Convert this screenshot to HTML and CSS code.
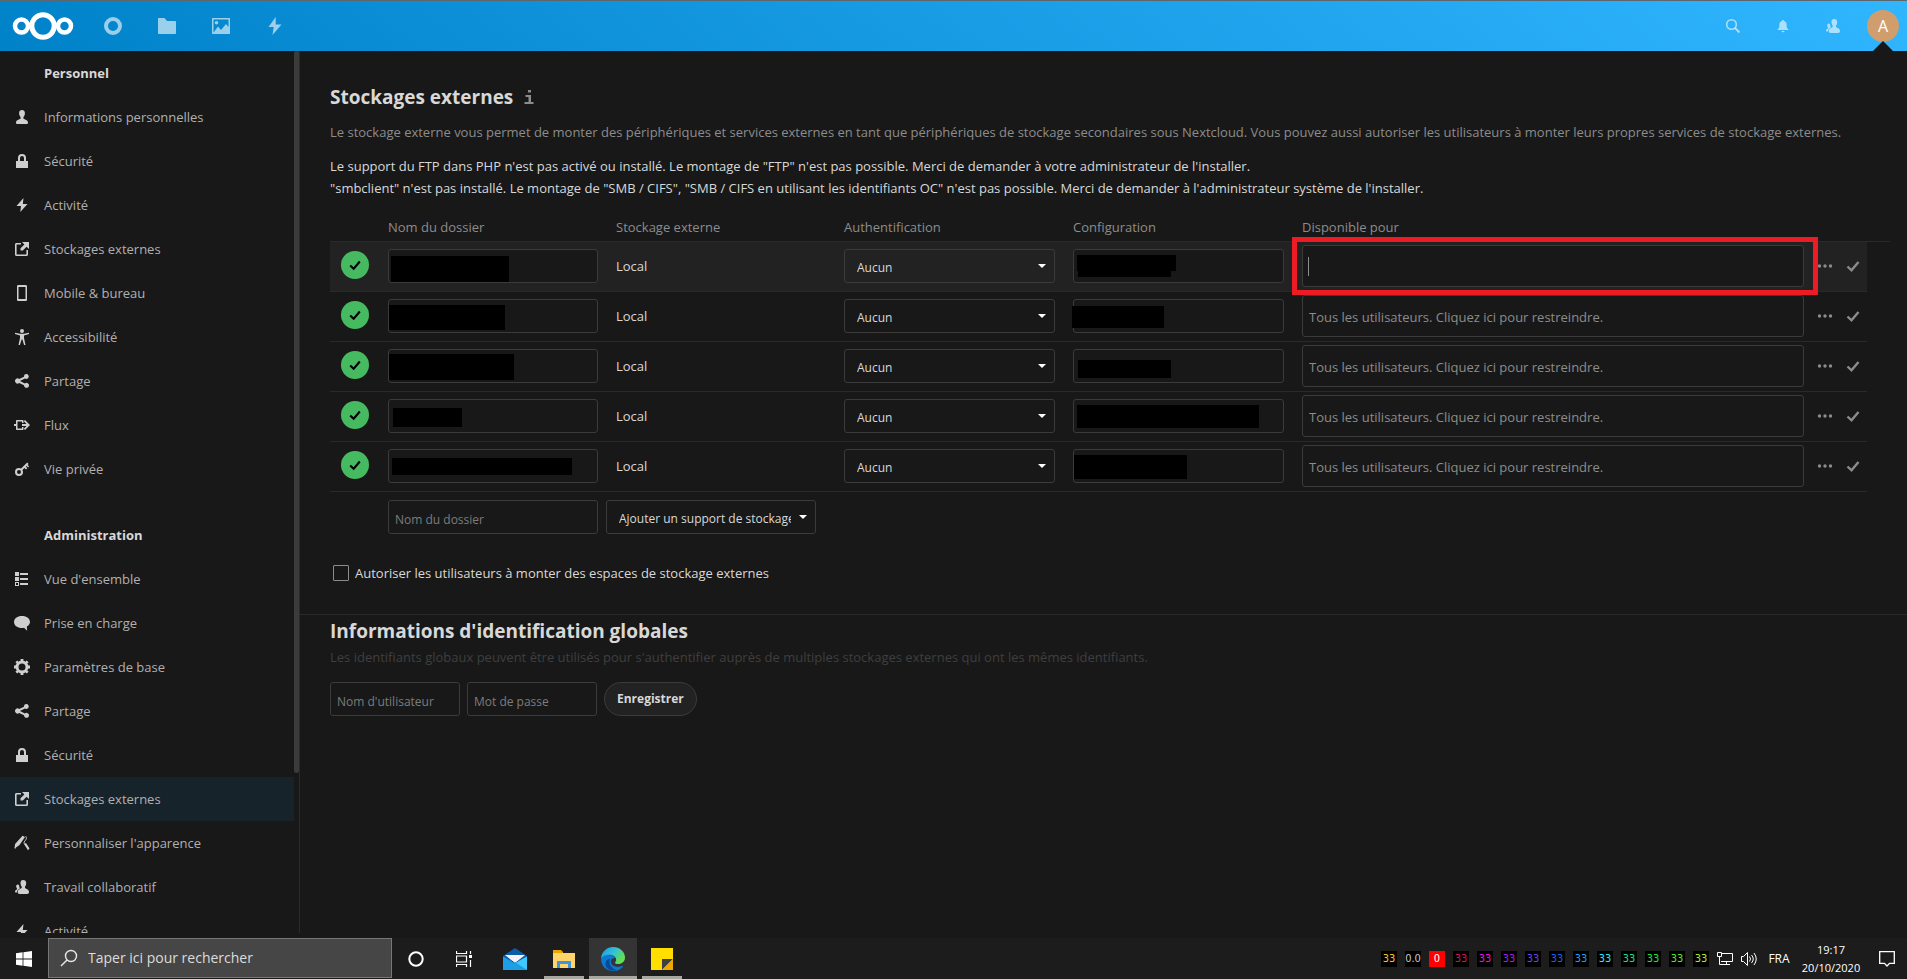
FILE: index.html
```html
<!DOCTYPE html>
<html lang="fr">
<head>
<meta charset="utf-8">
<title>Stockages externes - Nextcloud</title>
<link rel="stylesheet" href="styles.css">
</head>
<body>
<svg class="sprite" aria-hidden="true">
  <symbol id="user" viewBox="0 0 16 16"><path d="M8 1C6.300 1 5.100 2.300 5.100 4c0 1.800.5 3 1.500 4v1.500C5 10.800 2 11 2 13.500 2 14.500 2.500 15 3.500 15h9c1 0 1.500-.5 1.500-1.500 0-2.500-3-2.700-4.600-4V8c1-1 1.500-2.200 1.500-4 0-1.700-1.200-3-2.900-3z"/></symbol>
  <symbol id="lock" viewBox="0 0 16 16"><path d="M8 1a4 4 0 0 0-4 4v3H2v7h12V8h-2V5a4 4 0 0 0-4-4zm0 2a2 2 0 0 1 2 2v3H6V5a2 2 0 0 1 2-2z"/></symbol>
  <symbol id="bolt" viewBox="0 0 16 16"><path d="M9.500 1 2.500 9H7l-.7 6L13.500 7H8.800z"/></symbol>
  <symbol id="external" viewBox="0 0 16 16"><path d="M7 2H2.500C1.600 2 1 2.600 1 3.500v10c0 .9.600 1.500 1.500 1.500h10c.9 0 1.500-.6 1.500-1.500V9h-1.600v4.400H2.600V3.600H7zM8 1l2.400 2.400L6.500 7.300v2.200h2.300l3.800-3.800L15 8V1z"/></symbol>
  <symbol id="phone" viewBox="0 0 16 16"><path d="M4.300 0C3.600 0 3 .6 3 1.300v13.400c0 .7.600 1.300 1.300 1.300h7.400c.7 0 1.300-.6 1.300-1.300V1.300C13 .6 12.400 0 11.700 0zm.2 2h7v12h-7z"/></symbol>
  <symbol id="access" viewBox="0 0 16 16"><circle cx="8" cy="2" r="2"/><path d="M1 3.700v1.200l5 1.500V9L4.500 16h1.400L7.600 10.500h.8L10.100 16h1.400L10 9V6.400l5-1.500V3.700L10 4.800H6z"/></symbol>
  <symbol id="share" viewBox="0 0 16 16"><path d="M12.500 1A2.500 2.500 0 0 0 10 3.800L5.200 6.100A2.500 2.500 0 1 0 5.200 9.900L10 12.200a2.500 2.500 0 1 0 .9-1.800L6 8.100V8l4.900-2.400A2.500 2.500 0 1 0 12.500 1z"/></symbol>
  <symbol id="flow" viewBox="0 0 16 16"><path d="M3 3h5.500c.6 0 1 .4 1 1v2H8V4.600H3.500v6.800H8V10h1.500v2c0 .6-.4 1-1 1H3c-.6 0-1-.4-1-1V9H0V7h2V4c0-.6.4-1 1-1zM11 3l5 5-5 5-1.200-1.200L12.500 9H8V7h4.500L9.800 4.200z"/></symbol>
  <symbol id="key" viewBox="0 0 16 16"><path d="M5 7a4 4 0 1 0 4 4c0-.8-.2-1.500-.6-2.100L10.500 7l1.500 1.500 1.300-1.200L11.800 5.700l.8-.8 1.500 1.500 1-1-1.500-1.500 1-1L13.200 1.500 7.100 7.600C6.500 7.200 5.800 7 5 7zm0 2a2 2 0 1 1 0 4 2 2 0 0 1 0-4z"/></symbol>
  <symbol id="list" viewBox="0 0 16 16"><path fill-rule="evenodd" d="M1 1h4v4H1zM1 6h4v4H1zM1 11h4v4H1zm1 1v2h2v-2zM6 2h8v2H6zM6 7h8v2H6zM6 12h8v2H6z"/></symbol>
  <symbol id="comment" viewBox="0 0 16 16"><path d="M8 1C3.300 1 0 3.600 0 7s3.300 6 8 6c.7 0 1.400-.1 2-.2l3.200 3-.4-4.200C14.800 10.500 16 8.900 16 7c0-3.400-3.300-6-8-6z"/></symbol>
  <symbol id="gear" viewBox="0 0 16 16"><circle cx="8" cy="8" r="5" fill="none" stroke="currentColor" stroke-width="3"/><path d="M6.600 0h2.800v3H6.600zM6.600 13h2.800v3H6.600zM0 6.600h3v2.800H0zM13 6.600h3v2.800h-3zM1.400 3.300l1.900-1.900 2 2-1.900 1.900zM10.700 12.600l1.900-1.900 2 2-1.900 1.900zM12.700 1.400l1.900 1.900-2 2-1.900-1.900zM3.400 10.700l1.900 1.900-2 2-1.900-1.900z"/></symbol>
  <symbol id="brush" viewBox="0 0 16 16"><path d="M8.500.8 11 2 5.500 10 2 12.600 1.200 14 .5 13l.6-4z"/><path d="M11.500 1.200c1.800 1.500.6 3.300-.6 4.800-1 1.300-1.300 2.200.3 3.500" fill="none" stroke="currentColor"/><path d="m10 9 2-1 3.500 5.500L14 15.300z"/></symbol>
  <symbol id="contacts" viewBox="0 0 16 16"><path d="M9 1C7.400 1 6.500 2.200 6.500 4c0 1.600.4 2.700 1.200 3.600v1.500c-1.400 1-4 1.400-4 4 0 1.200.6 1.900 2 1.900H13c1.400 0 2-.7 2-1.900 0-2.600-2.800-3-4-4V7.600c.8-.9 1.200-2 1.200-3.600 0-1.800-1.200-3-3.200-3z"/><path d="M3.800 5.500c-1 0-1.600.7-1.600 1.800 0 .9.300 1.600.8 2v.9C2.200 10.900 1 11.200 1 12.600c0 .6.400 1 1.100 1h.8c-.1-2.200 1.200-3.400 2.900-4.100L5.300 7.500c0-1.300-.6-2-1.500-2z"/></symbol>
  <symbol id="tick" viewBox="0 0 16 16"><path d="M2.500 8.500 6.500 12.300 13.500 4" fill="none" stroke="currentColor" stroke-width="2.400"/></symbol>
  <symbol id="dots" viewBox="0 0 16 16"><circle cx="2.500" cy="8" r="1.700"/><circle cx="8" cy="8" r="1.700"/><circle cx="13.500" cy="8" r="1.700"/></symbol>
</svg>

<header class="header">
  <a class="logo" href="#" aria-label="Nextcloud"><svg viewBox="0 0 62 30"><g fill="none" stroke="#fff"><circle cx="9.500" cy="15" r="6.500" stroke-width="4.500"/><circle cx="31" cy="15" r="11.200" stroke-width="5"/><circle cx="52.500" cy="15" r="6.500" stroke-width="4.500"/></g></svg></a>
  <nav class="apps" aria-label="Applications">
    <a href="#" aria-label="Tableau de bord"><svg viewBox="0 0 20 20"><circle cx="10" cy="10" r="7" fill="none" stroke="currentColor" stroke-width="4"/></svg></a>
    <a href="#" aria-label="Fichiers"><svg viewBox="0 0 20 20"><path d="M1.500 2h6l2.500 3h8c.6 0 1 .4 1 1v11c0 .6-.4 1-1 1H2c-.6 0-1-.4-1-1V2.500z"/></svg></a>
    <a href="#" aria-label="Photos"><svg viewBox="0 0 20 20"><path fill-rule="evenodd" d="M1.500 2h17c.3 0 .5.200.5.500v15c0 .3-.2.500-.5.500h-17c-.3 0-.5-.2-.5-.5v-15c0-.3.200-.5.500-.5zM2.500 3.500v13L7 10.500l3 3.500 5-6 2.500 3V3.500zM5.500 5a1.800 1.800 0 1 0 0 3.600 1.800 1.800 0 0 0 0-3.600z"/></svg></a>
    <a href="#" aria-label="Activité"><svg viewBox="0 0 20 20"><path d="M10.700 1 3.500 11h5.200l-1.200 8L16.500 8.500h-5.800z"/></svg></a>
  </nav>
  <div class="header-right">
    <button aria-label="Rechercher"><svg viewBox="0 0 16 16"><circle cx="6.500" cy="6.500" r="4.800" fill="none" stroke="currentColor" stroke-width="1.600"/><path d="m10 10 4.500 4.500" stroke="currentColor" stroke-width="2"/></svg></button>
    <button aria-label="Notifications"><svg viewBox="0 0 16 16"><path d="M8 2c-.6 0-1 .4-1 1C5 3.500 4.400 5 4.400 7c0 3-.7 3.500-1.900 4.500V12h11v-.5C12.300 10.500 11.600 10 11.600 7c0-2-.6-3.500-2.600-4 0-.6-.4-1-1-1zM6.500 13a1.500 1.200 0 0 0 3 0z"/></svg></button>
    <button aria-label="Contacts"><svg><use href="#contacts"/></svg></button>
    <button class="account" aria-label="Paramètres du compte"><span class="avatar">A</span></button>
  </div>
</header>

<div class="content">
  <aside class="sidebar">
    <nav class="menu" aria-label="Paramètres">
      <h3>Personnel</h3>
      <a href="#"><svg><use href="#user"/></svg>Informations personnelles</a>
      <a href="#"><svg><use href="#lock"/></svg>Sécurité</a>
      <a href="#"><svg><use href="#bolt"/></svg>Activité</a>
      <a href="#"><svg><use href="#external"/></svg>Stockages externes</a>
      <a href="#"><svg><use href="#phone"/></svg>Mobile &amp; bureau</a>
      <a href="#"><svg><use href="#access"/></svg>Accessibilité</a>
      <a href="#"><svg><use href="#share"/></svg>Partage</a>
      <a href="#"><svg><use href="#flow"/></svg>Flux</a>
      <a href="#"><svg><use href="#key"/></svg>Vie privée</a>
      <h3 class="second">Administration</h3>
      <a href="#"><svg><use href="#list"/></svg>Vue d'ensemble</a>
      <a href="#"><svg><use href="#comment"/></svg>Prise en charge</a>
      <a href="#"><svg><use href="#gear"/></svg>Paramètres de base</a>
      <a href="#"><svg><use href="#share"/></svg>Partage</a>
      <a href="#"><svg><use href="#lock"/></svg>Sécurité</a>
      <a href="#" class="active"><svg><use href="#external"/></svg>Stockages externes</a>
      <a href="#"><svg><use href="#brush"/></svg>Personnaliser l'apparence</a>
      <a href="#"><svg><use href="#contacts"/></svg>Travail collaboratif</a>
      <a href="#"><svg><use href="#bolt"/></svg>Activité</a>
    </nav>
    <div class="scroll-thumb"></div>
  </aside>

  <main class="main">
    <section class="storages">
      <h2>Stockages externes <a href="#" class="info" aria-label="Documentation"><svg viewBox="0 0 16 16"><path d="M7 1h3v2.500H7zM4.500 6H10v7h2.500v2h-9v-2h4V8h-3z"/></svg></a></h2>
      <p class="hint">Le stockage externe vous permet de monter des périphériques et services externes en tant que périphériques de stockage secondaires sous Nextcloud. Vous pouvez aussi autoriser les utilisateurs à monter leurs propres services de stockage externes.</p>
      <p class="warning">Le support du FTP dans PHP n'est pas activé ou installé. Le montage de "FTP" n'est pas possible. Merci de demander à votre administrateur de l'installer.<br>"smbclient" n'est pas installé. Le montage de "SMB / CIFS", "SMB / CIFS en utilisant les identifiants OC" n'est pas possible. Merci de demander à l'administrateur système de l'installer.</p>

      <table class="grid">
        <colgroup><col class="c-status"><col class="c-name"><col class="c-storage"><col class="c-auth"><col class="c-config"><col class="c-users"><col class="c-actions"><col class="c-end"></colgroup>
        <thead>
          <tr><th></th><th>Nom du dossier</th><th class="storage">Stockage externe</th><th>Authentification</th><th>Configuration</th><th>Disponible pour</th><th></th><th></th></tr>
        </thead>
        <tbody>
          <tr class="current">
            <td class="status"><span class="ok"><svg><use href="#tick"/></svg></span></td>
            <td><div class="field"><input type="text" aria-label="Nom du dossier"><i class="mask n1"></i></div></td>
            <td class="storage">Local</td>
            <td><div class="field select"><select aria-label="Authentification"><option>Aucun</option></select></div></td>
            <td><div class="field"><input type="text" aria-label="Configuration"><i class="mask k1"></i><i class="mask k1b"></i></div></td>
            <td class="users"><div class="field highlight"><input type="text" aria-label="Disponible pour"><i class="caret"></i></div></td>
            <td class="actions"><div><button aria-label="Options"><svg><use href="#dots"/></svg></button><button aria-label="Enregistrer"><svg><use href="#tick"/></svg></button></div></td>
            <td class="end"></td>
          </tr>
          <tr>
            <td class="status"><span class="ok"><svg><use href="#tick"/></svg></span></td>
            <td><div class="field"><input type="text" aria-label="Nom du dossier"><i class="mask n2"></i></div></td>
            <td class="storage">Local</td>
            <td><div class="field select"><select aria-label="Authentification"><option>Aucun</option></select></div></td>
            <td><div class="field"><input type="text" aria-label="Configuration"><i class="mask k2"></i></div></td>
            <td class="users"><div class="field"><input type="text" aria-label="Disponible pour" placeholder="Tous les utilisateurs. Cliquez ici pour restreindre."></div></td>
            <td class="actions"><div><button aria-label="Options"><svg><use href="#dots"/></svg></button><button aria-label="Enregistrer"><svg><use href="#tick"/></svg></button></div></td>
            <td class="end"></td>
          </tr>
          <tr>
            <td class="status"><span class="ok"><svg><use href="#tick"/></svg></span></td>
            <td><div class="field"><input type="text" aria-label="Nom du dossier"><i class="mask n3"></i></div></td>
            <td class="storage">Local</td>
            <td><div class="field select"><select aria-label="Authentification"><option>Aucun</option></select></div></td>
            <td><div class="field"><input type="text" aria-label="Configuration"><i class="mask k3"></i></div></td>
            <td class="users"><div class="field"><input type="text" aria-label="Disponible pour" placeholder="Tous les utilisateurs. Cliquez ici pour restreindre."></div></td>
            <td class="actions"><div><button aria-label="Options"><svg><use href="#dots"/></svg></button><button aria-label="Enregistrer"><svg><use href="#tick"/></svg></button></div></td>
            <td class="end"></td>
          </tr>
          <tr>
            <td class="status"><span class="ok"><svg><use href="#tick"/></svg></span></td>
            <td><div class="field"><input type="text" aria-label="Nom du dossier"><i class="mask n4"></i></div></td>
            <td class="storage">Local</td>
            <td><div class="field select"><select aria-label="Authentification"><option>Aucun</option></select></div></td>
            <td><div class="field"><input type="text" aria-label="Configuration"><i class="mask k4"></i></div></td>
            <td class="users"><div class="field"><input type="text" aria-label="Disponible pour" placeholder="Tous les utilisateurs. Cliquez ici pour restreindre."></div></td>
            <td class="actions"><div><button aria-label="Options"><svg><use href="#dots"/></svg></button><button aria-label="Enregistrer"><svg><use href="#tick"/></svg></button></div></td>
            <td class="end"></td>
          </tr>
          <tr>
            <td class="status"><span class="ok"><svg><use href="#tick"/></svg></span></td>
            <td><div class="field"><input type="text" aria-label="Nom du dossier"><i class="mask n5"></i></div></td>
            <td class="storage">Local</td>
            <td><div class="field select"><select aria-label="Authentification"><option>Aucun</option></select></div></td>
            <td><div class="field"><input type="text" aria-label="Configuration"><i class="mask k5"></i></div></td>
            <td class="users"><div class="field"><input type="text" aria-label="Disponible pour" placeholder="Tous les utilisateurs. Cliquez ici pour restreindre."></div></td>
            <td class="actions"><div><button aria-label="Options"><svg><use href="#dots"/></svg></button><button aria-label="Enregistrer"><svg><use href="#tick"/></svg></button></div></td>
            <td class="end"></td>
          </tr>
          <tr class="add">
            <td></td>
            <td><div class="field"><input type="text" aria-label="Nom du dossier" placeholder="Nom du dossier"></div></td>
            <td class="new"><div class="field select"><select aria-label="Stockage externe"><option>Ajouter un support de stockage</option></select></div></td>
            <td></td><td></td><td></td><td></td><td></td>
          </tr>
        </tbody>
      </table>

      <label class="allow"><input type="checkbox"><span>Autoriser les utilisateurs à monter des espaces de stockage externes</span></label>
    </section>

    <section class="credentials">
      <h2>Informations d'identification globales</h2>
      <p class="faint">Les identifiants globaux peuvent être utilisés pour s'authentifier auprès de multiples stockages externes qui ont les mêmes identifiants.</p>
      <form>
        <input type="text" aria-label="Nom d'utilisateur" placeholder="Nom d'utilisateur">
        <input type="password" aria-label="Mot de passe" placeholder="Mot de passe">
        <button type="button">Enregistrer</button>
      </form>
    </section>
  </main>
</div>

<footer class="taskbar">
  <button aria-label="Démarrer"><svg class="i16" viewBox="0 0 16 16"><path fill="#fff" d="M0 2.300 6.600 1.300v6.300H0zM7.400 1.200 16 0v7.600H7.400zM0 8.400h6.600v6.300L0 13.700zM7.400 8.400H16V16l-8.600-1.200z"/></svg></button>
  <label class="search"><svg viewBox="0 0 18 18"><circle cx="11" cy="7" r="5.500"/><path d="m7 11-6 6"/></svg><input type="text" aria-label="Rechercher" placeholder="Taper ici pour rechercher"></label>
  <button aria-label="Cortana"><svg class="i16" viewBox="0 0 16 16"><circle cx="8" cy="8" r="6.700" fill="none" stroke="#fff" stroke-width="2"/></svg></button>
  <button aria-label="Affichage des tâches"><svg class="i16" viewBox="0 0 16 16"><path d="M.5 0v2.500h10V0M.5 16v-2.500h10V16M.5 5h10v6H.5zM14.500 0v3M14.500 9v7" fill="none" stroke="#fff" stroke-width="1.200"/><path fill="#fff" d="M13 4h3v3h-3z"/></svg></button>
  <div class="pinned">
    <button aria-label="Courrier"><svg class="i24" viewBox="0 0 24 24"><path fill="#0d5ca8" d="M0 9 12 1l12 8v5H0z"/><path fill="#f4f4f4" d="M2 8h20L12 16z"/><path fill="#1d9fe6" d="M0 9.500 24 23H0z"/><path fill="#41c8fa" d="M24 9.500 10 17l14 6z"/><path fill="#1d9fe6" d="m0 23 12-8 12 8z"/></svg></button>
    <button class="open" aria-label="Explorateur de fichiers"><svg class="i24" viewBox="0 0 24 24"><path fill="#e8a600" d="M1 3h8l2 2v4H1z"/><path fill="#ffd46a" d="M1 6h22v15H1z"/><path fill="#3c95dd" d="M5 14h14v7h-3v-4H8v4H5z"/></svg></button>
    <button class="open focused" aria-label="Microsoft Edge"><svg class="i24" viewBox="0 0 24 24"><defs><linearGradient id="e1" x1="0" x2="1" y1="0" y2=".5"><stop offset="0" stop-color="#1797d8"/><stop offset=".5" stop-color="#30bde0"/><stop offset="1" stop-color="#66e04e"/></linearGradient></defs><path fill="#0c78d0" d="M1 10c4-4 12-3 13 1-5 0-5 5-2 7.500 3 2 7 1.500 9.500.2.700 0 .5.800 0 1.300C19 23.500 15 24 12 24 5 24 0 18.500 0 12z"/><path fill="url(#e1)" d="M0 11.500C.5 4.500 6 0 12 0c7 0 12 5 12 10.500 0 4-3 6.500-7 6.500-2 0-3.500-.7-3-1.500 2-2 1.500-6-3-7.500C7 7 2 8 0 11.500z"/><path fill="#0a4a94" d="M9 12c-2 5 2 10 6.500 11-6 2-11.500-2-11-7 .3-2.500 2-4 4.500-4z"/></svg></button>
    <button class="open note" aria-label="Pense-bête"><svg class="i24" viewBox="0 0 24 24"><path fill="#ffde00" d="M1 1h22v22H1z"/><path fill="#404040" d="M12 12h11L12 23z"/><path fill="#f0a800" d="M23 12v11H12z"/></svg></button>
  </div>
  <div class="tray">
    <div class="sensors"><span class="s1">33</span><span class="s2">0.0</span><span class="s3">0</span><span class="s4">33</span><span class="s5">33</span><span class="s6">33</span><span class="s7">33</span><span class="s8">33</span><span class="s9">33</span><span class="s10">33</span><span class="s11">33</span><span class="s12">33</span><span class="s13">33</span><span class="s14">33</span></div>
    <svg class="i16" viewBox="0 0 16 16"><path d="M5 2.500h10.500v8H4M.5 1.500h4v4h-4zM2.500 5.500v8h7M7 13.500h6M9.500 10.500v3" fill="none" stroke="#fff"/></svg>
    <svg class="i16" viewBox="0 0 16 16"><path d="M.5 5.500h2l4-4v13l-4-4h-2zM8.500 5.500q2 2.500 0 5M10.500 4q3.500 4 0 8M13 2q4.500 6 0 12" fill="none" stroke="#fff"/></svg>
    <span class="lang">FRA</span>
    <time class="clock">19:17<br>20/10/2020</time>
    <button aria-label="Notifications"><svg class="i16" viewBox="0 0 16 16"><path d="M.7.700h14.600v11.600H10.500L8 15l-2.500-2.700H.7z" fill="none" stroke="#fff" stroke-width="1.300"/></svg></button>
  </div>
</footer>
</body>
</html>
```
FILE: styles.css
```css
* { box-sizing: border-box; }

body {
  margin: 0;
  height: 100vh;
  display: flex;
  flex-direction: column;
  background: #181818;
  color: #d8d8d8;
  font: 13px/22px "Open Sans", "Noto Sans", sans-serif;
  overflow: hidden;
}

.sprite { position: absolute; width: 0; height: 0; }
svg { display: block; fill: currentColor; }
a { color: inherit; text-decoration: none; }
button { border: 0; padding: 0; background: none; color: inherit; font: inherit; }
h2, h3, p { margin: 0; }

/* Header */
.header {
  flex: none;
  height: 51px;
  display: flex;
  align-items: center;
  border-top: 1px solid #5c666d;
  padding: 0 8px 0 12px;
  background: linear-gradient(40deg, #0082c9 0%, #30b6ff 100%);
  color: #fff;
}
.logo svg { width: 62px; height: 30px; }
.apps { display: flex; gap: 10px; margin-left: 17px; }
.apps a { width: 44px; height: 50px; display: grid; place-items: center; opacity: .6; }
.apps svg { width: 20px; height: 20px; }
.header-right { display: flex; margin-left: auto; }
.header-right button { width: 50px; height: 50px; display: grid; place-items: center; color: rgba(255, 255, 255, .6); }
.header-right svg { width: 16px; height: 16px; }
.header-right .account { position: relative; width: 32px; margin-left: 9px; color: #fff; }
.avatar { width: 32px; height: 32px; border-radius: 50%; background: #d09e6d; font-size: 16px; line-height: 32px; }
.account::after {
  content: "";
  position: absolute;
  bottom: 0;
  left: 6px;
  border: 10px solid transparent;
  border-top: 0;
  border-bottom-color: #181818;
}

/* Layout */
.content { flex: 1; min-height: 0; display: flex; margin-bottom: 5px; }
.sidebar { flex: none; width: 300px; display: flex; border-right: 1px solid #2a2a2a; overflow: hidden; }
.menu { flex: 1; }
.scroll-thumb { width: 5px; height: 722px; border-radius: 3px; background: #3b3b3b; }
.menu h3 { padding-left: 44px; font-size: 13px; font-weight: 700; line-height: 44px; }
.menu .second { margin-top: 22px; }
.menu a { height: 44px; display: flex; align-items: center; gap: 14px; padding-left: 14px; color: #b0b0b0; }
.menu svg { width: 16px; height: 16px; color: #cfcfcf; }
.menu .active { background: #17232a; }
.main { flex: 1; min-width: 0; }

/* External storages */
.storages { padding: 31px 17px 30px 30px; }
h2 { display: flex; align-items: center; font-size: 19px; line-height: 30px; font-weight: 700; }
.info { margin-left: 8px; color: #8c8c8c; }
.info svg { width: 16px; height: 16px; }
.hint { margin-top: 9px; color: #8c8c8c; }
.warning { margin-top: 12px; }

.grid { width: 100%; margin-top: 13px; table-layout: fixed; border-collapse: separate; border-spacing: 0; }
.c-status { width: 50px; }
.c-name { width: 226px; }
.c-storage { width: 230px; }
.c-auth, .c-config { width: 229px; }
.c-actions { width: 56px; }
.c-end { width: 23px; }
.grid th { height: 30px; padding: 0 8px; border-bottom: 1px solid #2a2a2a; color: #8c8c8c; font-weight: 400; text-align: left; }
.grid td { height: 50px; padding: 7px 8px 0; border-bottom: 1px solid #2a2a2a; vertical-align: top; }
.grid .storage { padding-left: 10px; }
.grid td.storage { padding-top: 13px; }
.grid .status { padding: 9px 11px; }
.grid .users { padding: 3px 7px 0 8px; }
.grid .actions { padding: 10px 0 0; }
.grid .end { border: 0; padding: 0; }
.grid .add td { border: 0; padding-top: 8px; }
.grid .new { padding-left: 0; padding-right: 20px; }
.grid td:nth-child(4), .grid td:nth-child(5) { padding-right: 10px; }
.current td:not(.end) { background: #222; }

.ok { width: 28px; height: 28px; display: grid; place-items: center; border-radius: 50%; background: #46ba61; color: #000; }
.ok svg { width: 14px; height: 14px; }
.actions div { display: flex; }
.actions button { width: 28px; height: 28px; display: grid; place-items: center; color: #8c8c8c; }
.actions svg { width: 16px; height: 16px; }

.field { position: relative; }
.field input, .field select, form input {
  display: block;
  width: 100%;
  height: 34px;
  margin: 0;
  padding: 4px 6px 0;
  border: 1px solid #3b3b3b;
  border-radius: 3px;
  background: #181818;
  color: #d8d8d8;
  font: 12px/20px "Open Sans", "Noto Sans", sans-serif;
}
.field input::placeholder, form input::placeholder { color: #7c7c7c; opacity: 1; }
.users .field input { height: 42px; padding: 2px 6px 0; font-size: 13px; }
.users .field input::placeholder { color: #8c8c8c; }
.field select { appearance: none; padding: 3px 24px 0 12px; background: transparent; }
.select::after {
  content: "";
  position: absolute;
  right: 9px;
  top: 15px;
  border: 4px solid transparent;
  border-top-color: #fff;
  border-bottom: 0;
}

/* Call-out frame around the focused field */
.highlight::after { content: ""; position: absolute; inset: -8px -14px -8px -10px; border: 5px solid #ed1c24; pointer-events: none; }
.caret { position: absolute; left: 6px; top: 12px; width: 1px; height: 19px; background: #8c8c8c; }

/* Redacted values */
.mask { position: absolute; background: #000; }
.n1 { left: 3px; top: 7px; width: 118px; height: 26px; }
.n2 { left: 1px; top: 6px; width: 116px; height: 25px; }
.n3 { left: 1px; top: 5px; width: 125px; height: 26px; }
.n4 { left: 5px; top: 9px; width: 69px; height: 19px; }
.n5 { left: 4px; top: 9px; width: 180px; height: 17px; }
.k1 { left: 4px; top: 6px; width: 99px; height: 16px; }
.k1b { left: 5px; top: 22px; width: 93px; height: 6px; }
.k2 { left: -1px; top: 7px; width: 92px; height: 22px; }
.k3 { left: 5px; top: 11px; width: 93px; height: 18px; }
.k4 { left: 4px; top: 6px; width: 182px; height: 23px; }
.k5 { left: 1px; top: 6px; width: 113px; height: 24px; }

.allow { display: flex; align-items: center; gap: 6px; width: max-content; margin-top: 20px; padding-left: 3px; }
.allow input { appearance: none; width: 16px; height: 16px; margin: 0; border: 1px solid #8c8c8c; border-radius: 1px; }

/* Global credentials */
.credentials { padding: 1px 30px; border-top: 1px solid #2a2a2a; }
.faint { color: #3f3f3f; }
form { display: flex; gap: 7px; margin-top: 14px; }
form input { width: 130px; }
form button { height: 34px; padding: 0 12px; border: 1px solid #3b3b3b; border-radius: 17px; background: #222; font-size: 12px; font-weight: 700; }

/* Taskbar */
.taskbar { flex: none; height: 41px; display: flex; background: #1c1c1c; color: #fff; }
.taskbar button { position: relative; flex: none; width: 48px; height: 41px; display: grid; place-items: center; }
.i16 { width: 16px; height: 16px; }
.i24 { width: 24px; height: 24px; }
.search { flex: 0 1 344px; height: 40px; display: flex; align-items: center; gap: 10px; padding-left: 11px; border: 1px solid #777; background: #464646; }
.search svg { flex: none; width: 18px; height: 18px; fill: none; stroke: #e8e8e8; stroke-width: 1.4; }
.search input { flex: 1; min-width: 0; border: 0; padding: 0; background: none; color: #fff; font: inherit; font-size: 14px; outline: 0; }
.search input::placeholder { color: #dcdcdc; opacity: 1; }
.pinned { display: flex; gap: 1px; margin-left: 3px; }
.pinned .focused { background: #343434; }
.open::after { content: ""; position: absolute; left: 4px; right: 4px; bottom: 0; height: 3px; background: #a8a8a0; }
.focused::after { left: 0; right: 0; }
.tray { display: flex; align-items: center; gap: 8px; margin-left: auto; font-size: 12px; line-height: 18px; }
.sensors { display: flex; gap: 8px; }
.sensors span { width: 16px; height: 16px; background: #000; font: 11px/16px "DejaVu Sans Condensed", "Liberation Sans", sans-serif; text-align: center; }
.sensors .s1 { color: #ffc81e; }
.sensors .s2 { color: #c8c8c8; }
.sensors .s3 { color: #fff; background: #f00; }
.sensors .s4 { color: #d81458; }
.sensors .s5 { color: #e614e6; }
.sensors .s6 { color: #a01eff; }
.sensors .s7 { color: #6446ff; }
.sensors .s8 { color: #1464ff; }
.sensors .s9 { color: #1ea0ff; }
.sensors .s10 { color: #28f0ff; }
.sensors .s11 { color: #14e68c; }
.sensors .s12 { color: #14f03c; }
.sensors .s13 { color: #5af014; }
.sensors .s14 { color: #b4f01e; }
.lang { width: 24px; text-align: center; margin-left: 2px; }
.clock { width: 64px; font-size: 11px; text-align: center; }
.tray button { width: 36px; padding-right: 4px; }
```
